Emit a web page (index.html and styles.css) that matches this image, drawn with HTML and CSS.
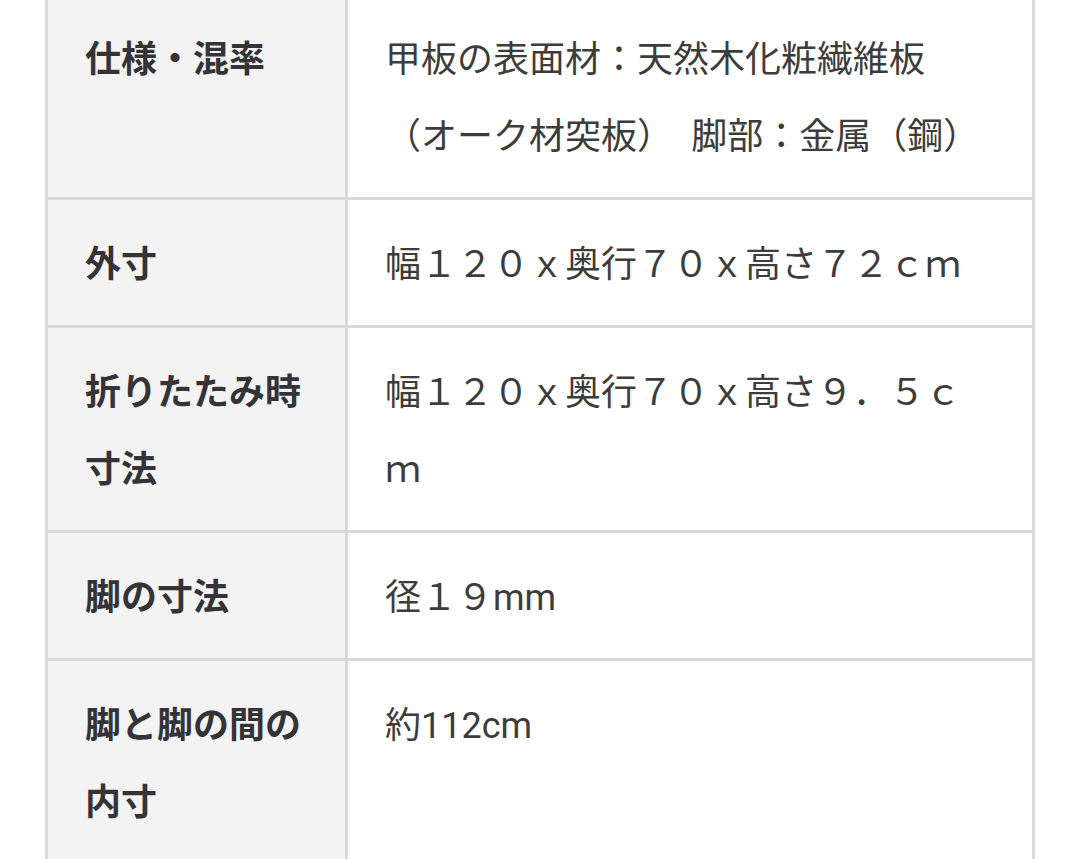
FILE: index.html
```html
<!DOCTYPE html>
<html lang="ja">
<head>
<meta charset="utf-8">
<link rel="stylesheet" href="styles.css">
</head>
<body>
<div class="spec">
  <div class="th">仕様・混率</div>
  <div class="td">甲板の表面材：天然木化粧繊維板（オーク材突板）&#8194;脚部：金属（鋼）</div>
  <div class="th">外寸</div>
  <div class="td">幅１２０ｘ奥行７０ｘ高さ７２ｃｍ</div>
  <div class="th">折りたたみ時寸法</div>
  <div class="td">幅１２０ｘ奥行７０ｘ高さ９．５ｃｍ</div>
  <div class="th">脚の寸法</div>
  <div class="td">径１９mm</div>
  <div class="th">脚と脚の間の内寸</div>
  <div class="td">約112cm</div>
</div>
</body>
</html>
```
FILE: styles.css
```css
html, body {
  margin: 0;
  padding: 0;
  background: #ffffff;
}
body {
  font-family: Roboto, "Noto Sans CJK JP", sans-serif;
  overflow: hidden;
}
.spec {
  width: 984px;
  margin: -8px 0 0 45px;
  padding: 3px;
  background: #d9d9d9;
  display: grid;
  grid-template-columns: 297px 1fr;
  gap: 3px;
}
.th, .td {
  padding: 27px 36px 21px 37px;
  font-size: 36px;
  line-height: 77px;
}
.th {
  background: #f3f3f4;
  color: #333338;
  font-weight: 700;
}
.td {
  background: #ffffff;
  color: #3c3c3c;
  font-weight: 400;
}
```
